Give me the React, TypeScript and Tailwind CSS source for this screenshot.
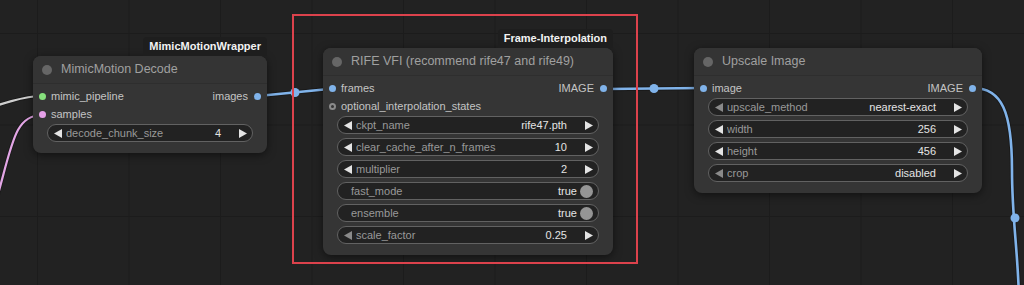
import React from 'react';

type Slot = { name: string; color: string; optional?: boolean };
type Widget =
  | { kind: 'number'; label: string; value: string; dimLeft?: boolean }
  | { kind: 'toggle'; label: string; value: string };

interface NodeProps {
  x: number;
  y: number;
  w: number;
  title: string;
  badge?: string;
  inputs: Slot[];
  outputs: Slot[];
  widgets: Widget[];
}

const font = { fontFamily: '"Liberation Sans", Arial, sans-serif' };

function Tri({ dir, dim }: { dir: 'left' | 'right'; dim?: boolean }) {
  return (
    <svg width="8" height="9" viewBox="0 0 8 9" className="shrink-0">
      <polygon points={dir === 'left' ? '8,0 8,9 0,4.5' : '0,0 0,9 8,4.5'} fill={dim ? '#8a8a8a' : '#e4e4e4'} />
    </svg>
  );
}

function Dot({ color, optional }: { color: string; optional?: boolean }) {
  if (optional) {
    return (
      <span className="w-[7px] h-[7px] rounded-full shrink-0 border-2 border-[#8a8a8a] bg-[#353535]" />
    );
  }
  return <span className="w-[7px] h-[7px] rounded-full shrink-0" style={{ background: color }} />;
}

function WidgetRow({ w }: { w: Widget }) {
  if (w.kind === 'toggle') {
    return (
      <div className="h-[18px] rounded-full border border-[#626262] bg-[#222] flex items-center pl-[13px] pr-[5px] text-[11px]">
        <span className="flex-1 text-[#999]">{w.label}</span>
        <span className="text-[#e4e4e4]">{w.value}</span>
        <span className="ml-[3px] w-[13px] h-[13px] rounded-full bg-[#959595]" />
      </div>
    );
  }
  return (
    <div className="h-[18px] rounded-full border border-[#626262] bg-[#222] flex items-center pl-[6px] pr-[5px] text-[11px]">
      <Tri dir="left" dim={w.dimLeft} />
      <span className="ml-[4px] flex-1 text-[#999] truncate">{w.label}</span>
      <span className="text-[#e4e4e4] mr-[18px]">{w.value}</span>
      <Tri dir="right" />
    </div>
  );
}

function GraphNode({ x, y, w, title, badge, inputs, outputs, widgets }: NodeProps) {
  const rows = Math.max(inputs.length, outputs.length);
  return (
    <div
      className="absolute rounded-[8px] bg-[#353535] shadow-[0_2px_8px_rgba(0,0,0,0.5)]"
      style={{ left: x, top: y, width: w }}
    >
      {badge && (
        <div className="absolute right-0 bottom-full h-[19px] px-[6px] flex items-center rounded-t-[4px] bg-[#1e1e1e] text-[11px] font-bold text-[#f2f2f2]">
          {badge}
        </div>
      )}
      <div className="h-[28px] flex items-center pl-[9px] gap-[9px] border-b border-[#2e2e2e] rounded-t-[8px] bg-[#343434]">
        <span className="w-[10px] h-[10px] rounded-full bg-[#666]" />
        <span className="text-[12.5px] text-[#a0a0a0]">{title}</span>
      </div>
      <div className="pt-[3px] pb-[11px]">
        {Array.from({ length: rows }).map((_, i) => (
          <div key={i} className="h-[18px] flex items-center justify-between px-[6px] text-[11px] text-[#c4c4c4]">
            <div className="flex items-center gap-[5px]">
              {inputs[i] && (
                <>
                  <Dot color={inputs[i].color} optional={inputs[i].optional} />
                  <span>{inputs[i].name}</span>
                </>
              )}
            </div>
            <div className="flex items-center gap-[6px]">
              {outputs[i] && (
                <>
                  <span>{outputs[i].name}</span>
                  <Dot color={outputs[i].color} />
                </>
              )}
            </div>
          </div>
        ))}
        <div className="mt-[1px] px-[14px] flex flex-col gap-[4px]">
          {widgets.map((wd) => (
            <WidgetRow key={wd.label} w={wd} />
          ))}
        </div>
      </div>
    </div>
  );
}

const BLUE = '#80b3ea';

export default function App() {
  return (
    <div
      className="relative w-[1024px] h-[285px] overflow-hidden bg-[#222] bg-[linear-gradient(to_right,#1c1c1c_1px,transparent_1px),linear-gradient(to_bottom,#1c1c1c_1px,transparent_1px)] bg-[size:91.5px_91.5px] bg-[position:37px_33px]"
      style={font}
    >
      {/* links */}
      <svg className="absolute inset-0" width="1024" height="285">
        <g fill="none" strokeLinecap="round">
          <path d="M -40 118 C -10 108, 20 96, 42 96" stroke="#1a1a1a" strokeWidth="4" />
          <path d="M -40 118 C -10 108, 20 96, 42 96" stroke="#cfcfcf" strokeWidth="2.2" />
          <path d="M -8 215 C 12 150, 12 115, 42 115" stroke="#1a1a1a" strokeWidth="4" />
          <path d="M -8 215 C 12 150, 12 115, 42 115" stroke="#e3a6e6" strokeWidth="2.2" />
          <path d="M 258 96 L 329 89" stroke="#1a1a1a" strokeWidth="4.5" />
          <path d="M 258 96 L 329 89" stroke={BLUE} strokeWidth="2.6" />
          <path d="M 606 89 L 702 88" stroke="#1a1a1a" strokeWidth="4.5" />
          <path d="M 606 89 L 702 88" stroke={BLUE} strokeWidth="2.6" />
          <path d="M 973 88 C 1002 88, 1012 112, 1012 170 C 1012 220, 1018 250, 1019 300" stroke="#1a1a1a" strokeWidth="4.5" />
          <path d="M 973 88 C 1002 88, 1012 112, 1012 170 C 1012 220, 1018 250, 1019 300" stroke={BLUE} strokeWidth="2.6" />
        </g>
        <circle cx="295" cy="92.5" r="4.5" fill={BLUE} />
        <circle cx="654" cy="88.5" r="4.5" fill={BLUE} />
        <circle cx="1015" cy="218" r="4.5" fill={BLUE} />
      </svg>

      <GraphNode
        x={33}
        y={56}
        w={234}
        title="MimicMotion Decode"
        badge="MimicMotionWrapper"
        inputs={[
          { name: 'mimic_pipeline', color: '#86e07c' },
          { name: 'samples', color: '#e5a0e8' },
        ]}
        outputs={[{ name: 'images', color: BLUE }]}
        widgets={[{ kind: 'number', label: 'decode_chunk_size', value: '4' }]}
      />

      <GraphNode
        x={323}
        y={48}
        w={290}
        title="RIFE VFI (recommend rife47 and rife49)"
        badge="Frame-Interpolation"
        inputs={[
          { name: 'frames', color: BLUE },
          { name: 'optional_interpolation_states', color: '#8a8a8a', optional: true },
        ]}
        outputs={[{ name: 'IMAGE', color: BLUE }]}
        widgets={[
          { kind: 'number', label: 'ckpt_name', value: 'rife47.pth' },
          { kind: 'number', label: 'clear_cache_after_n_frames', value: '10' },
          { kind: 'number', label: 'multiplier', value: '2' },
          { kind: 'toggle', label: 'fast_mode', value: 'true' },
          { kind: 'toggle', label: 'ensemble', value: 'true' },
          { kind: 'number', label: 'scale_factor', value: '0.25', dimLeft: true },
        ]}
      />

      <GraphNode
        x={694}
        y={48}
        w={288}
        title="Upscale Image"
        inputs={[{ name: 'image', color: BLUE }]}
        outputs={[{ name: 'IMAGE', color: BLUE }]}
        widgets={[
          { kind: 'number', label: 'upscale_method', value: 'nearest-exact', dimLeft: true },
          { kind: 'number', label: 'width', value: '256' },
          { kind: 'number', label: 'height', value: '456' },
          { kind: 'number', label: 'crop', value: 'disabled', dimLeft: true },
        ]}
      />

      {/* highlight box */}
      <div className="absolute left-[292px] top-[14px] w-[346px] h-[250px] border-2 border-[#dc424c]" />
    </div>
  );
}
